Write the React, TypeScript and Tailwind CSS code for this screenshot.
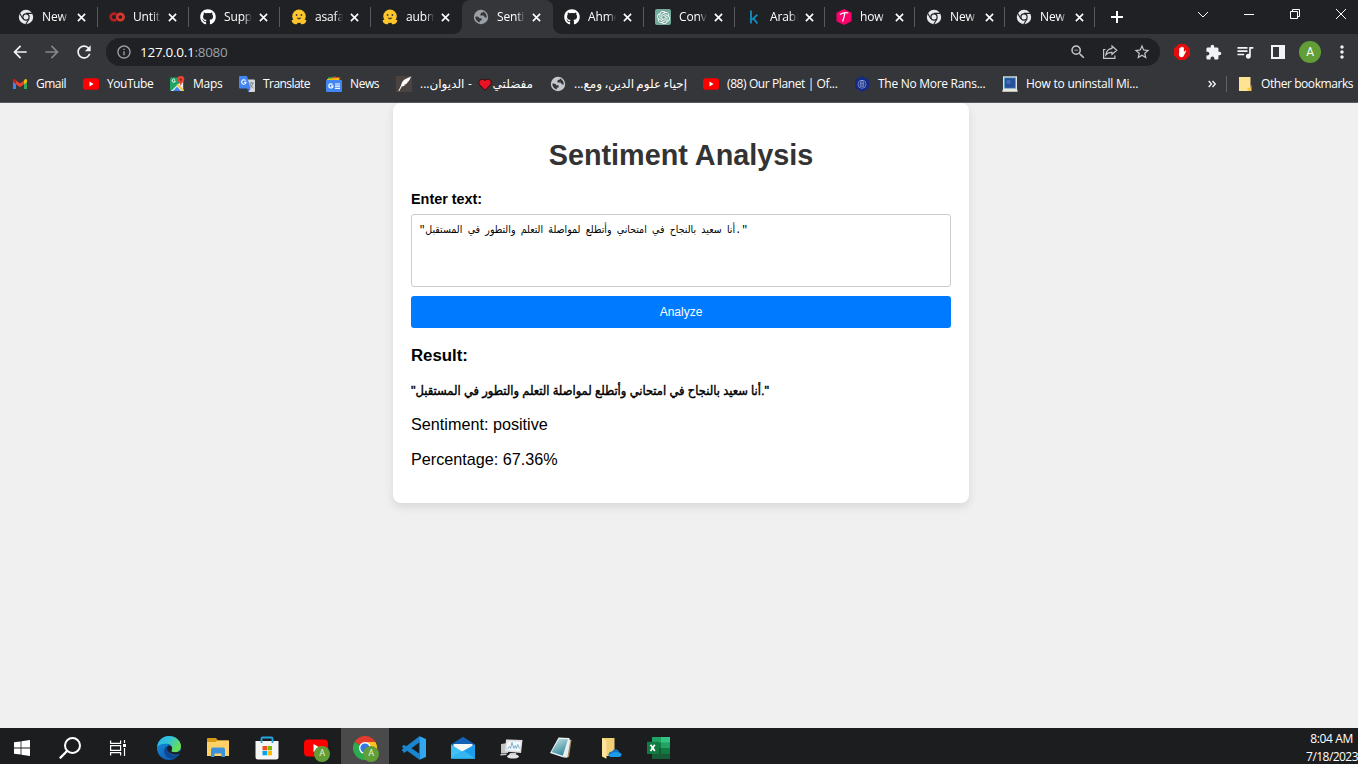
import type { ReactNode } from "react";
import { FaGithub } from "react-icons/fa6";
import { SiOpenai } from "react-icons/si";
import {
  MdArrowBack,
  MdArrowForward,
  MdExtension,
  MdInfoOutline,
  MdMoreVert,
  MdOutlineZoomOut,
  MdQueueMusic,
  MdRefresh,
  MdStarBorder,
} from "react-icons/md";

const SAMPLE = '"أنا سعيد بالنجاح في امتحاني وأتطلع لمواصلة التعلم والتطور في المستقبل."';

function ChromeMono() {
  return (
    <svg viewBox="0 0 16 16" className="size-4">
      <circle cx="8" cy="8" r="7.2" fill="#e8eaed" />
      <path d="M8 4.4h6.6M4.9 9.8 1.6 4.2M11.1 9.8 7.8 15.2" stroke="#202124" strokeWidth="1.1" />
      <circle cx="8" cy="8" r="3.7" fill="#202124" />
      <circle cx="8" cy="8" r="2.5" fill="#e8eaed" />
    </svg>
  );
}

function Colab() {
  return (
    <svg viewBox="0 0 16 16" className="size-4" fill="none" strokeWidth="2.7">
      <circle cx="11.4" cy="8" r="3.2" stroke="#d9382e" />
      <path d="M7.3 5.7A3.3 3.3 0 1 0 7.300 10.300" stroke="#b52020" />
    </svg>
  );
}

function Hugging() {
  return (
    <svg viewBox="0 0 16 16" className="size-4">
      <circle cx="8" cy="7.2" r="6.7" fill="#ffc62b" />
      <path d="M.6 11.3q1.7-1.2 3 .2l2.7 1.500q.7 2.400-1.800 2.300Q1 14.800.6 11.300ZM15.400 11.300q-1.700-1.200-3 .2L9.700 13q-.7 2.400 1.800 2.300 3.500-.5 3.900-4Z" fill="#ffc62b" />
      <circle cx="5.600" cy="6" r=".9" fill="#3a3b45" />
      <circle cx="10.400" cy="6" r=".9" fill="#3a3b45" />
      <path d="M5.600 8.300q2.400 1 4.800 0-.6 2.200-2.400 2.200t-2.400-2.200Z" fill="#5a4630" />
    </svg>
  );
}

function Globe({ fill = "#9aa0a6" }: { fill?: string }) {
  return (
    <svg viewBox="0 0 16 16" className="size-4">
      <circle cx="8" cy="8" r="7.200" fill={fill} />
      <path
        d="M2.300 7.700C4.500 6.900 6 7.700 6.300 9.300h2.300v2.300l-1.800.2v1.700C4.300 13 2.300 10.500 2.300 7.700ZM9.800 2.500v1.300H8.200L7.400 5v1.600h3.200l1.200 1.700 1.900.5C14 5.500 12 3.100 9.800 2.500Z"
        fill="#35363a"
      />
    </svg>
  );
}

function ChatGpt() {
  return (
    <span className="flex size-4 items-center justify-center rounded-[2px] bg-[#74aa9c] text-white">
      <SiOpenai size={13} />
    </span>
  );
}

function Kaggle() {
  return (
    <svg viewBox="0 0 16 16" className="size-4" fill="none" stroke="#1489ba" strokeWidth="1.900">
      <path d="M5 1.500V14.500M11.400 5.600 6 10.800M7.400 9.300l4 5.200" />
    </svg>
  );
}

function PinkHex() {
  return (
    <svg viewBox="0 0 16 16" className="size-4">
      <path d="m8 0 7.500 3.800v8.400L8 16 .5 12.200V3.800Z" fill="#fb0069" />
      <path d="M3.800 5.400Q8.500 2.700 12.300 4M9 4.200Q8 8.500 6.600 12.500" stroke="#fff" strokeWidth="1.200" fill="none" />
    </svg>
  );
}

type TabInfo = { title: string; icon: ReactNode; width: string; active?: boolean; noSep?: boolean };

const tabs: TabInfo[] = [
  { title: "New", icon: <ChromeMono />, width: "w-[91px]" },
  { title: "Untitl", icon: <Colab />, width: "w-[91px]" },
  { title: "Supp", icon: <FaGithub size={16} />, width: "w-[91px]" },
  { title: "asafa", icon: <Hugging />, width: "w-[91px]" },
  { title: "aubm", icon: <Hugging />, width: "w-[91px]", noSep: true },
  { title: "Senti", icon: <Globe />, width: "w-[91px]", active: true, noSep: true },
  { title: "Ahme", icon: <FaGithub size={16} />, width: "w-[91px]" },
  { title: "Conv", icon: <ChatGpt />, width: "w-[91px]" },
  { title: "Arabi", icon: <Kaggle />, width: "w-[90px]" },
  { title: "how", icon: <PinkHex />, width: "w-[90px]" },
  { title: "New", icon: <ChromeMono />, width: "w-[90px]" },
  { title: "New", icon: <ChromeMono />, width: "w-[90px]" },
];

function Tab({ title, icon, width, active, noSep }: TabInfo) {
  return (
    <div className={`relative flex h-[34px] shrink-0 items-center pl-[11px] ${width} ${active ? "rounded-t-lg bg-[#35363a]" : ""}`}>
      {active && (
        <>
          <span className="absolute bottom-0 -left-2 size-2 bg-[radial-gradient(circle_at_0_0,#202124_7.5px,#35363a_8px)]" />
          <span className="absolute -right-2 bottom-0 size-2 bg-[radial-gradient(circle_at_100%_0,#202124_7.5px,#35363a_8px)]" />
        </>
      )}
      <span className="flex size-4 shrink-0 items-center justify-center">{icon}</span>
      <span className="ml-2 w-[28px] shrink-0 whitespace-nowrap [mask-image:linear-gradient(to_right,black_70%,transparent)]">
        {title}
      </span>
      <svg viewBox="0 0 10 10" className="ml-[7px] size-[9px] shrink-0" stroke="currentColor" fill="none">
        <path d="m1 1 8 8M9 1 1 9" strokeWidth="1.800" />
      </svg>
      {!noSep && <span className="absolute top-[7px] right-0 h-5 w-px bg-[#56595d]" />}
    </div>
  );
}

function Gmail() {
  return (
    <svg viewBox="0 0 16 16" className="size-4">
      <path d="M1 3.500v9.500h3V7Z" fill="#4285f4" />
      <path d="M15 3.500v9.500h-3V7Z" fill="#34a853" />
      <path d="M12 4.500 13.200 3Q15 2.500 15 4.500V6l-3 2.300Z" fill="#fbbc04" />
      <path d="M4 4.500 2.800 3Q1 2.500 1 4.500V6l3 2.300Z" fill="#c5221f" />
      <path d="M4 4.500 8 7.500l4-3v3.800l-4 3-4-3Z" fill="#ea4335" />
    </svg>
  );
}

function YouTube() {
  return (
    <svg viewBox="0 0 16 16" className="size-4">
      <rect y="2.300" width="16" height="11.400" rx="2.800" fill="#f00" />
      <path d="M6.500 5.600v4.800L10.600 8Z" fill="#fff" />
    </svg>
  );
}

function Maps() {
  return (
    <svg viewBox="0 0 16 16" className="size-4">
      <rect x="1" y="1.500" width="13.500" height="13.500" rx="1.200" fill="#1da462" />
      <path d="M2 15 14 3.500V13q0 2-2 2Z" fill="#e8eaed" />
      <path d="m4 15 4-4.200 4 4.200Z" fill="#4285f4" />
      <path d="m7.500 9 1.200-1.200L15 14v1h-1.500Z" fill="#fbc02d" />
      <path d="M5.900 3.600A1.600 1.600 0 1 0 6.300 5H5" stroke="#fff" strokeWidth=".9" fill="none" />
      <path d="M11.800 0a3.500 3.500 0 0 0-3.500 3.600c0 2.300 2.800 3 3.500 6.400.7-3.400 3.500-4.100 3.500-6.400A3.500 3.500 0 0 0 11.800 0Z" fill="#ea4335" />
      <circle cx="11.800" cy="3.600" r="1.200" fill="#8c1f14" />
    </svg>
  );
}

function Translate() {
  return (
    <svg viewBox="0 0 16 16" className="size-4">
      <path d="M6 3.500h9q1 0 1 1V15q0 1-1 1H9.500Z" fill="#d5d7da" />
      <path d="M1 0h7l3.500 12.500H1q-1 0-1-1V1q0-1 1-1Z" fill="#4285f4" />
      <path d="M8 12.500h3.500L9.300 16Z" fill="#2c5cc5" />
      <path d="M6.500 4.600A2.200 2.200 0 1 0 7 6.200H4.900" stroke="#fff" strokeWidth="1.100" fill="none" />
      <path d="M10.300 7h4.500M12.500 6v1M14 7q-.5 3-3 4.500M11 8q1 2.500 3.500 4" stroke="#77808c" strokeWidth=".9" fill="none" />
    </svg>
  );
}

function News() {
  return (
    <svg viewBox="0 0 16 16" className="size-4">
      <path d="M2 1.500 10 .5V4H2Z" fill="#34a853" />
      <path d="m7 .8 7.300.6-.8 4H6Z" fill="#ea4335" />
      <path d="M1 3 13 1.800V5H1Z" fill="#fbbc04" />
      <rect y="4" width="16" height="12" rx="1" fill="#4285f4" />
      <path d="M6.500 8.500A2.100 2.100 0 1 0 7 10.200H5M9 8h5M9 10.200h5M9 12.400h5" stroke="#fff" strokeWidth="1.200" fill="none" />
    </svg>
  );
}

function Feather() {
  return (
    <svg viewBox="0 0 16 16" className="size-4">
      <path d="M0 0h16v16H0Z" fill="#4b4340" />
      <path d="M15 .6Q14.200 3.500 12.500 5.500l-1.300.4.700.3-2 2-2 .5 1.300.3Q8 10.200 5.800 10.400L3.200 15.300l-.8-.3L5 9.500Q6 4.500 10 2.800Z" fill="#fff" />
    </svg>
  );
}

function Ransom() {
  return (
    <svg viewBox="0 0 16 16" className="size-4">
      <path d="m8 0 7 4v8l-7 4-7-4V4Z" fill="#152a83" />
      <circle cx="8" cy="8.300" r="4" fill="none" stroke="#7c8dcc" strokeWidth=".9" />
      <path d="M6.300 7.300h3.400v3H6.300ZM6.900 7.300V4.500h2.200v2.800M8 8v1.500" fill="none" stroke="#a5b1e0" strokeWidth=".7" />
    </svg>
  );
}

function Computer() {
  return (
    <svg viewBox="0 0 16 16" className="size-4">
      <path d="M1 .3h14v14H1Z" fill="#dfe2df" />
      <path d="M2.200 1.500h11.600v11H2.200Z" fill="#3d8fc0" />
      <path d="M3 2.300h10v9.500H3Z" fill="#27509b" />
      <path d="M4.500 4h4v4h-4Z" fill="#4469b5" />
      <path d="M.8 13.500h14.400l.6 2.200H.2Z" fill="#eceade" />
    </svg>
  );
}

function Heart() {
  return (
    <svg viewBox="0 0 14 13" className="mr-[1px] ml-[2px] inline-block h-[13px] w-[14px] align-[-3px]">
      <path d="M7 12.400 1.500 6.700C-1 3.500 3.500-1 7 2.600c3.500-3.600 8 .9 5.500 4.100Z" fill="#e81224" stroke="#150607" strokeWidth=".8" />
    </svg>
  );
}

type Bookmark = { label: ReactNode; icon: ReactNode; width: string; text: string; rtl?: boolean };

const bookmarks: Bookmark[] = [
  { label: "Gmail", icon: <Gmail />, width: "w-[71px]", text: "tracking-[-0.500px]" },
  { label: "YouTube", icon: <YouTube />, width: "w-[86px]", text: "tracking-[-0.450px]" },
  { label: "Maps", icon: <Maps />, width: "w-[70px]", text: "tracking-[-0.250px]" },
  { label: "Translate", icon: <Translate />, width: "w-[87px]", text: "tracking-[-0.550px]" },
  { label: "News", icon: <News />, width: "w-[70px]", text: "tracking-[-0.400px]" },
  {
    label: (
      <>
        مفضلتي
        <Heart /> - الديوان...
      </>
    ),
    icon: <Feather />,
    width: "w-[154px]",
    text: "tracking-normal [word-spacing:0.500px]",
    rtl: true,
  },
  {
    label: "إحياء علوم الدين، ومع...",
    icon: <Globe fill="#c4c7cb" />,
    width: "w-[153px]",
    text: "tracking-normal [word-spacing:-0.800px]",
    rtl: true,
  },
  { label: "(88) Our Planet | Of...", icon: <YouTube />, width: "w-[151px]", text: "tracking-[-0.400px]" },
  { label: "The No More Rans...", icon: <Ransom />, width: "w-[148px]", text: "tracking-[-0.280px]" },
  { label: "How to uninstall Mi...", icon: <Computer />, width: "w-[150px]", text: "tracking-[-0.240px]" },
];

function BrowserChrome() {
  return (
    <header className="h-[103px] shrink-0 overflow-hidden border-b border-[#5a5b5f] bg-[#35363a] text-white">
      <div className="flex h-[34px] bg-[#202124] pl-[7px]">
        {tabs.map((t, i) => (
          <Tab key={i} {...t} />
        ))}
        <svg viewBox="0 0 12 12" className="mt-[11px] ml-[16px] size-3" stroke="#fff" strokeWidth="2">
          <path d="M6 0v12M0 6h12" />
        </svg>
        <div className="ml-auto flex items-start gap-[34px] pt-[9px] pr-[11px]">
          <svg viewBox="0 0 12 12" className="h-3 w-3" stroke="currentColor" fill="none">
            <path d="m1 3 5 5 5-5" />
          </svg>
          <svg viewBox="0 0 12 12" className="size-3" stroke="currentColor" fill="none">
            <path d="M1 5.500h10" />
          </svg>
          <svg viewBox="0 0 12 12" className="size-3" stroke="currentColor" fill="none">
            <path d="M1.500 2.500h7v7h-7ZM3.500 2.500v-2h7v7h-2" />
          </svg>
          <svg viewBox="0 0 12 12" className="size-3" stroke="currentColor" fill="none">
            <path d="m1 0 10 10M11 0 1 10" />
          </svg>
        </div>
      </div>

      <div className="flex h-9 items-center pl-[10px] text-[#f1f3f4]">
        <MdArrowBack size={20} />
        <MdArrowForward size={20} className="ml-3 text-[#85878a]" />
        <MdRefresh size={20} className="ml-3" />
        <div className="ml-3 flex h-7 w-[1054px] items-center rounded-full bg-[#202124] pr-[9px] pl-[10px] text-[#9aa0a6]">
          <MdInfoOutline size={16} />
          <span className="ml-2 text-[13.5px] tracking-[-0.280px]">
            <span className="text-white">127.0.0.1</span>:8080
          </span>
          <MdOutlineZoomOut size={18} className="ml-auto text-[#c4c7c9]" />
          <svg viewBox="0 0 16 16" className="ml-[15px] size-4" fill="none" stroke="#c4c7c9" strokeWidth="1.200">
            <path d="M3.500 5.500H1.600v8.900h11.300v-3M10 2l4.800 4.300L10 10.500V8.300q-4-.2-6.200 2.700Q4.500 5 10 4.300Z" />
          </svg>
          <MdStarBorder size={18} className="ml-[15px] text-[#c4c7c9]" />
        </div>
        <svg viewBox="0 0 16 16" className="ml-[14px] size-4">
          <path d="M4.700 0h6.600L16 4.700v6.600L11.300 16H4.700L0 11.300V4.700Z" fill="#e40d0d" />
          <path
            d="M5.200 8V4.500q.6-.8 1.100 0v-1q.6-.8 1.200 0v-.6q.6-.8 1.200 0v.8q.6-.7 1.200 0v4.600l1.300-1.700q.9-.5 1 .3l-2 4.100q-.9 2.400-2.700 2.200-2.600-.3-2.600-3Z"
            fill="#fff"
          />
        </svg>
        <MdExtension size={17} className="ml-[15px]" />
        <MdQueueMusic size={20} className="ml-[13px]" />
        <svg viewBox="0 0 14 14" className="ml-[16px] h-[14px] w-[14px]" fill="none" stroke="#f1f3f4">
          <path d="M1 1h12v12H1Z" strokeWidth="2" />
          <path d="M10.500 1v12" strokeWidth="5" />
        </svg>
        <span className="ml-[14px] flex size-[22px] shrink-0 items-center justify-center rounded-full bg-[#629e37] font-['Roboto',sans-serif] text-[12px] text-white">
          A
        </span>
        <MdMoreVert size={20} className="ml-[11px] shrink-0" />
      </div>

      <nav className="flex h-[28px] items-center pl-3">
        {bookmarks.map((b, i) => (
          <div key={i} className={`flex shrink-0 items-center gap-2 whitespace-nowrap ${b.width}`}>
            <span className="flex size-4 shrink-0">{b.icon}</span>
            <span dir={b.rtl ? "rtl" : "ltr"} className={b.text}>
              {b.label}
            </span>
          </div>
        ))}
        <svg viewBox="0 0 8 8" className="ml-[56px] size-2 shrink-0" fill="none" stroke="#f1f3f4" strokeWidth="1.400">
          <path d="m.7 1 2.800 3L.7 7M4.500 1l2.800 3-2.800 3" />
        </svg>
        <span className="ml-[10px] h-4 w-px shrink-0 bg-[#5f6368]" />
        <svg viewBox="0 0 16 16" className="ml-[11px] size-4 shrink-0">
          <path d="M1 1h11.500v14H1Z" fill="#ffe394" />
          <path d="M9.500 12h3V9.500h1V15h-4Z" fill="#f3c74c" />
        </svg>
        <span className="ml-[7px] tracking-[-0.430px] whitespace-nowrap">Other bookmarks</span>
      </nav>
    </header>
  );
}

function SentimentCard() {
  return (
    <main className="flex-1 bg-[#f0f0f0] font-['Liberation_Sans','DejaVu_Sans_Condensed','DejaVu_Sans',sans-serif] tracking-normal text-black">
      <section className="mx-auto h-[400px] w-[576px] translate-x-[2px] rounded-lg bg-white px-[18px] pt-[36px] shadow-[0_4px_10px_rgba(0,0,0,0.1)]">
        <h1 className="text-center text-[28.8px] leading-[33px] font-bold text-[#333]">Sentiment Analysis</h1>
        <label htmlFor="text" className="mt-[18px] block text-[14.4px] leading-[18px] font-bold">
          Enter text:
        </label>
        <textarea
          id="text"
          defaultValue={SAMPLE}
          spellCheck={false}
          className="mt-[6px] block h-[73px] w-full resize-none rounded-[3px] border border-[#ccc] px-[7px] py-[8px] font-['Liberation_Mono','DejaVu_Sans_Condensed','DejaVu_Sans',monospace] text-[10.500px] leading-[14px] [word-spacing:-1px] whitespace-nowrap"
        />
        <button className="mt-[9px] block h-8 w-full rounded-[3px] bg-[#007bff] text-[12px] text-white">Analyze</button>
        <h3 className="mt-[18px] text-[16.8px] leading-5 font-bold">Result:</h3>
        <p className="mt-[16px] text-[12.800px] leading-[18px] [word-spacing:-0.300px] whitespace-nowrap [-webkit-text-stroke:0.400px_black]">
          {SAMPLE}
        </p>
        <p className="mt-[15px] text-[16.2px] leading-[19px]">Sentiment: positive</p>
        <p className="mt-4 text-[16.2px] leading-[19px]">Percentage: 67.36%</p>
      </section>
    </main>
  );
}

function Badge() {
  return (
    <span className="absolute right-[-2px] bottom-[-2px] flex size-4 items-center justify-center rounded-full bg-[#629e37] font-['Roboto',sans-serif] text-[9px] text-[#e4f0da]">
      A
    </span>
  );
}

function Slot({ children, active }: { children: ReactNode; active?: boolean }) {
  return (
    <div className="flex h-9 w-[49px] shrink-0 items-center justify-center pt-1">
      <div className={active ? "-mt-1 flex h-9 w-12 shrink-0 items-center justify-center bg-[#4a4a4a] pt-1" : ""}>
        <span className="relative block size-6">{children}</span>
      </div>
    </div>
  );
}

function Taskbar() {
  return (
    <footer className="flex h-9 shrink-0 overflow-hidden bg-[#1c1d1f] text-white">
      <div className="flex w-11 items-center justify-center pt-1">
        <svg viewBox="0 0 16 16" className="size-4" fill="#fff">
          <path d="m0 2.300 6.600-.9v6.200H0ZM7.400 1.300 16 0v7.600H7.400ZM0 8.400h6.600v6.200L0 13.700ZM7.400 8.400H16V16l-8.600-1.300Z" />
        </svg>
      </div>
      <div className="flex w-13 items-center justify-center pt-1">
        <svg viewBox="0 0 22 22" className="size-[22px]" fill="none" stroke="#fff" strokeWidth="2">
          <circle cx="13.500" cy="8.500" r="7.500" />
          <path d="M8 14 .8 21.300" strokeWidth="2.400" />
        </svg>
      </div>
      <div className="flex w-11 items-center justify-center pt-1">
        <svg viewBox="0 0 16 16" className="size-4" fill="none" stroke="#fff" strokeWidth="1.200">
          <path d="M.6.500v2.800h10V.500M.6 15.500v-2.800h10v2.800M.6 5.600h10v4.800H.6ZM14.500 0v3M14.500 8v8" />
          <path d="M14.500 4v3" strokeWidth="3" />
        </svg>
      </div>
      <div className="ml-[4.500px] flex">
        <Slot>
          <svg viewBox="0 0 24 24" className="size-6">
            <defs>
              <linearGradient id="edgeTop" x1="0" y1="0" x2="1" y2=".5">
                <stop stopColor="#2bb5ed" />
                <stop offset=".5" stopColor="#31c3d8" />
                <stop offset="1" stopColor="#6be04f" />
              </linearGradient>
              <linearGradient id="edgeSide" x1="0" y1="0" x2=".7" y2="1">
                <stop stopColor="#1695e2" />
                <stop offset="1" stopColor="#0d58ae" />
              </linearGradient>
            </defs>
            <circle cx="12" cy="12" r="12" fill="url(#edgeSide)" />
            <path d="M.1 11C1 4.500 6 0 12 0c7 0 12 5 12 10.300 0 4.200-3.300 6-6 6-2.300 0-4.200-.8-3.800-1.600 1.800-2.200 1-6.700-4-6.900C5 7.600.9 9 .1 11Z" fill="url(#edgeTop)" />
            <path d="M9 10.500c-4 4.500-1 11.700 5.500 12 3.500 0 6.200-1.800 7.800-4-5.300 2.400-10.800-.2-10.300-4.600Z" fill="#10468f" />
            <path d="M14.200 14.700c2-2.400.5-5.500-2.500-5.300-2 .5-2.300 3.200-.6 5.300 2.500 4 8 4.800 11.700 2.600l1.200 1.300-.2-4.200c-4 3-9 2-9.600.3Z" fill="#1c1d1f" />
          </svg>
        </Slot>
        <Slot>
          <svg viewBox="0 0 24 24" className="size-6">
            <path d="M1 3q0-1 1-1h8l2 2.500h10q1 0 1 1V20H1Z" fill="#d89b16" />
            <path d="M1 6h8.500l2-1.500H23V20H1Z" fill="#ffd166" />
            <path d="M5 21v-7.500q0-2 2-2h10q2 0 2 2V21h-3.500v-3.500h-7V21Z" fill="#3c93dc" />
          </svg>
        </Slot>
        <Slot>
          <svg viewBox="0 0 24 24" className="size-6">
            <path d="M.5 5h23v16q0 2.500-2.500 2.500H3Q.5 23.500.5 21Z" fill="#f5f5f5" />
            <path d="M6.500 7V2.500q0-1 1-1h9q1 0 1 1V7" fill="none" stroke="#24a7e5" strokeWidth="1.800" />
            <path d="M7.500 10H12v4.300H7.500Z" fill="#f25022" />
            <path d="M12.500 10H17v4.300h-4.500Z" fill="#7fba00" />
            <path d="M7.500 15H12v4.300H7.500Z" fill="#00a4ef" />
            <path d="M12.500 15H17v4.300h-4.500Z" fill="#ffb900" />
          </svg>
        </Slot>
        <Slot>
          <svg viewBox="0 0 24 24" className="size-6">
            <rect y="3.500" width="24" height="17" rx="4" fill="#f00" />
            <path d="M9.500 8v8l7-4Z" fill="#fff" />
          </svg>
          <Badge />
        </Slot>
        <Slot active>
          <svg viewBox="0 0 24 24" className="size-6">
            <path d="M12 12 1.600 6A12 12 0 0 1 22.400 6Z" fill="#e33b2e" />
            <path d="M12 12V6h10.400A12 12 0 0 1 12 24l5.200-9Z" fill="#fcc31e" />
            <path d="M12 12 1.600 6A12 12 0 0 0 12 24l5.200-9Z" fill="#2da94f" />
            <circle cx="12" cy="12" r="6" fill="#fff" />
            <circle cx="12" cy="12" r="4.600" fill="#3578e5" />
          </svg>
          <Badge />
        </Slot>
        <Slot>
          <svg viewBox="0 0 24 24" className="size-6">
            <path d="M17.500.2 5.700 11.500 2 8.700l-1.800 1.500v1L17.500 23.800Z" fill="#1b86cf" />
            <path d="M.2 14.200v-1L17.500.2v6.500L2 17Z" fill="#1b86cf" />
            <path d="M9.500 12.300 17.500 6.300v11.500Z" fill="#1c1d1f" />
            <path d="M17.500.2 24 3v18l-6.500 2.800Z" fill="#2fa8ef" />
          </svg>
        </Slot>
        <Slot>
          <svg viewBox="0 0 24 24" className="size-6">
            <path d="M0 8.500 12 .8l12 7.700v7H0Z" fill="#1261b4" />
            <path d="M2.500 8h19v9h-19Z" fill="#f7f7f7" />
            <path d="M0 8.500 12 16 24 8.500v14H0Z" fill="#41c0f5" />
            <path d="M0 22.500 12 15l12-6.500v14Z" fill="#1a9deb" />
            <path d="M0 22.500 13 14.800 24 22.500Z" fill="#35b6f1" />
          </svg>
        </Slot>
        <Slot>
          <svg viewBox="0 0 24 24" className="size-6">
            <path d="m1 8 7-1v10l-7 .5Z" fill="#c4c6c7" />
            <path d="m6 3.500 16.500.5L21 17 5 15.500Z" fill="#dfe1e2" />
            <path d="M7.500 5.500 20.800 6l-1.100 9-12.900-1Z" fill="#f5f9fb" />
            <path d="m7.500 13 2-2.500 1 2 1.500-6 1.800 6 1.500-3 1 3 1.500-4 1.700 4" fill="none" stroke="#6fa9cb" strokeWidth=".9" />
            <path d="M10 17h6l1 3.500H8ZM.5 18l6-.5v1.500l-6 .5Z" fill="#c9cbcc" />
            <ellipse cx="13" cy="20.500" rx="6" ry="2" fill="#e2e2e2" />
          </svg>
        </Slot>
        <Slot>
          <svg viewBox="0 0 24 24" className="size-6">
            <defs>
              <linearGradient id="note" x1="0" y1="0" x2=".5" y2="1">
                <stop stopColor="#c5e4e8" />
                <stop offset="1" stopColor="#3b8c9c" />
              </linearGradient>
            </defs>
            <path d="m18 3 4.500 1-2.500 17-5 .5Z" fill="#a3875c" />
            <path d="m17 2.500 4.500 1.200-3.200 18-4-.5Z" fill="#e6edef" />
            <path d="M9.500 1.500 20.500 2l-6 19.500L1 17Z" fill="#eaf3f4" />
            <path d="m10 3 9 .3-5.200 16.500L2.500 16Z" fill="url(#note)" />
          </svg>
        </Slot>
        <Slot>
          <svg viewBox="0 0 24 24" className="size-6">
            <path d="M4 2h12.500v18H8Z" fill="#f1cf74" />
            <path d="M4 2l4.500 2.500v18.300L4 20.500Z" fill="#ffe29b" />
            <path d="M13 21q-3-.3-2.500-3t3.500-2.500q1.500-3 4.500-2.200 2.500.8 2.500 3.200 2.500.2 2.500 2.300T21 21Z" fill="#1673c4" />
            <path d="M10.800 19q5-5 11.500-2 1.200.8 1.200 2T21 21h-8q-1.800-.3-2.200-2Z" fill="#1b9bec" />
          </svg>
        </Slot>
        <Slot>
          <svg viewBox="0 0 24 24" className="size-6">
            <path d="M5 1h18v22H5Z" fill="#21a366" />
            <path d="M5 12h9v11H5Z" fill="#185c37" />
            <path d="M14 1h9v5.500h-9Z" fill="#33c481" />
            <path d="M5 6.500h9V12H5ZM14 12h9v5.500h-9Z" fill="#107c41" />
            <path d="M14 17.500h9V23h-9Z" fill="#185c37" />
            <rect x="-.5" y="5.700" width="12.300" height="12.300" rx="1" fill="#107c41" />
            <path d="m3.500 8.800 4.300 6.300M7.800 8.800 3.500 15.100" stroke="#fff" strokeWidth="1.700" />
          </svg>
        </Slot>
      </div>
      <div className="mt-[2px] ml-auto flex flex-col items-end text-[12px] leading-[18px] whitespace-nowrap">
        <span className="pr-[5px] tracking-[-0.350px]">8:04 AM</span>
        <span className="tracking-[-0.550px]">7/18/2023</span>
      </div>
    </footer>
  );
}

export default function App() {
  return (
    <div className="flex h-[764px] w-[1358px] flex-col overflow-hidden font-['Open_Sans','DejaVu_Sans',sans-serif] text-[12px] tracking-[-0.150px]">
      <BrowserChrome />
      <SentimentCard />
      <Taskbar />
    </div>
  );
}
